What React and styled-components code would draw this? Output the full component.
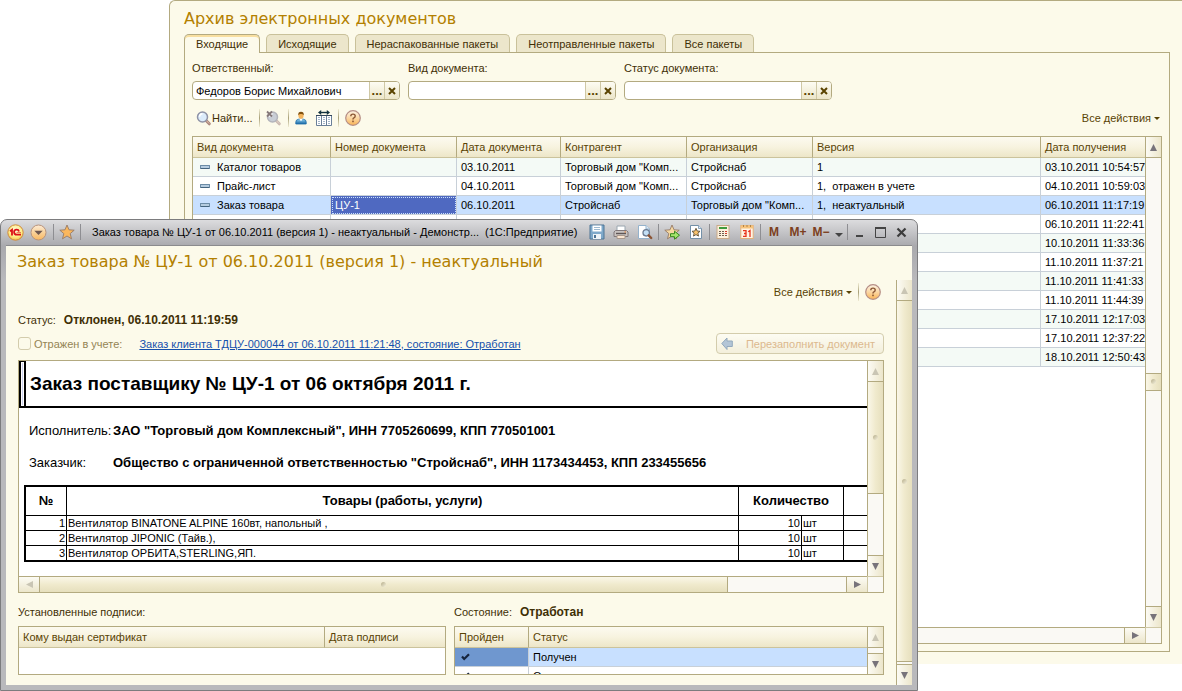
import styled, { createGlobalStyle, css } from "styled-components"


const line = "#b3aa80"
const paper = "#fcfaea"


const columns = ["Вид документа", "Номер документа", "Дата документа", "Контрагент", "Организация", "Версия", "Дата получения"]

const documents = [
  ["Каталог товаров", "", "03.10.2011", "Торговый дом \"Комп...", "Стройснаб", "1", "03.10.2011 10:54:57"],
  ["Прайс-лист", "", "04.10.2011", "Торговый дом \"Комп...", "Стройснаб", "1,  отражен в учете", "04.10.2011 10:59:03"],
  ["Заказ товара", "ЦУ-1", "06.10.2011", "Стройснаб", "Торговый дом \"Комп...", "1,  неактуальный", "06.10.2011 11:17:19"],
  ["", "", "", "", "", "", "06.10.2011 11:22:41"],
  ["", "", "", "", "", "", "10.10.2011 11:33:36"],
  ["", "", "", "", "", "", "11.10.2011 11:37:21"],
  ["", "", "", "", "", "", "11.10.2011 11:41:33"],
  ["", "", "", "", "", "", "11.10.2011 11:44:39"],
  ["", "", "", "", "", "", "17.10.2011 12:17:03"],
  ["", "", "", "", "", "", "17.10.2011 12:37:22"],
  ["", "", "", "", "", "", "18.10.2011 12:50:43"],
]

const goods = [
  "Вентилятор BINATONE ALPINE 160вт, напольный ,",
  "Вентилятор JIPONIC (Тайв.),",
  "Вентилятор ОРБИТА,STERLING,ЯП.",
]

const filters = [
  { id: "owner", label: "Ответственный:", value: "Федоров Борис Михайлович" },
  { id: "kind", label: "Вид документа:", value: "" },
  { id: "status", label: "Статус документа:", value: "" },
]


/* icons */

const FindIcon = ({ off }) => (
  <svg width="16" height="16" viewBox="0 0 16 16">
    <path d="M9.8 10.3 L13.3 13.8" stroke={off ? "#cbb9b0" : "#a9857c"} strokeWidth="3" strokeLinecap="round" />
    <path d="M10 10.3 L13 13.3" stroke={off ? "#e0d2c8" : "#e3c3ad"} strokeWidth="1" strokeLinecap="round" />
    <circle cx="6.5" cy="7" r="5" fill={off ? "#c9ced6" : "#dcecfb"} stroke={off ? "#b3b4bb" : "#8f93a6"} strokeWidth="1.5" />
    <path d="M3.5 6.8 a3.2 3.2 0 0 1 3-3" stroke="#fff" strokeWidth="1.5" fill="none" />
    {off && <path d="M1 1.5 L6 6.5 M6 1.5 L1 6.5" stroke="#86797a" strokeWidth="1.8" />}
  </svg>
)

const UserIcon = () => (
  <svg width="12" height="14" viewBox="0 0 12 14">
    <defs>
      <linearGradient id="coat" x1="0" y1="0" x2="0" y2="1">
        <stop offset="0" stopColor="#8fd0f0" />
        <stop offset="1" stopColor="#1766a4" />
      </linearGradient>
    </defs>
    <path d="M0.8 13 V11 Q0.8 8.6 3.6 8.2 H8.4 Q11.2 8.6 11.2 11 V13 Z" fill="url(#coat)" stroke="#1f6ea8" strokeWidth="0.8" />
    <path d="M4.3 8 L6 10.2 L7.7 8 Z" fill="#fff" />
    <ellipse cx="6" cy="4.6" rx="2.6" ry="3.2" fill="#f4b45c" />
    <path d="M3.2 4.2 Q3 0.8 6 0.8 Q9 0.8 8.8 4.2 Q7.6 2.8 6 2.9 Q4.4 2.8 3.2 4.2Z" fill="#80500f" />
  </svg>
)

const ColumnsIcon = () => (
  <svg width="16" height="16" viewBox="0 0 16 16">
    <path d="M0.5 5.5 H15.5 V15.5 H0.5 Z" fill="#fff" stroke="#6a7f98" />
    <path d="M5.5 5 V15 M10.5 5 V15" stroke="#6a7f98" />
    <path d="M0 5.5 H16" stroke="#33465c" />
    <path d="M2 7.5 H4 M2 9.5 H4 M2 11.5 H4 M2 13.5 H4 M7 7.5 H9 M7 9.5 H9 M7 11.5 H9 M7 13.5 H9 M12 7.5 H14 M12 9.5 H14 M12 11.5 H14 M12 13.5 H14" stroke="#a3b5c8" />
    <path d="M4 2.5 H12" stroke="#123240" strokeWidth="1.4" />
    <path d="M5.2 0 V5 L2 2.5 Z M10.8 0 V5 L14 2.5 Z" fill="#123240" />
  </svg>
)

const HelpIcon = () => (
  <svg width="16" height="16" viewBox="0 0 16 16">
    <defs>
      <linearGradient id="help" x1="0" y1="0" x2="0" y2="1">
        <stop offset="0" stopColor="#fdf3e4" />
        <stop offset="0.5" stopColor="#fbd7a4" />
        <stop offset="1" stopColor="#fab455" />
      </linearGradient>
    </defs>
    <circle cx="8" cy="8" r="7.3" fill="url(#help)" stroke="#b58e86" strokeWidth="1.2" />
    <path d="M5.8 6.2 Q5.8 4.1 8 4.1 Q10.2 4.1 10.2 6 Q10.2 7.2 8.9 7.9 Q8 8.3 8 9.4" stroke="#8a5634" strokeWidth="1.4" fill="none" />
    <rect x="7.2" y="10.6" width="1.6" height="1.6" fill="#8a5634" />
  </svg>
)

const LogoIcon = () => (
  <svg width="17" height="17" viewBox="0 0 17 17">
    <defs>
      <radialGradient id="logo" cx="0.5" cy="0.35" r="0.75">
        <stop offset="0" stopColor="#fffde0" />
        <stop offset="0.6" stopColor="#fdea80" />
        <stop offset="1" stopColor="#eda53a" />
      </radialGradient>
    </defs>
    <circle cx="8.5" cy="8.5" r="7.7" fill="url(#logo)" stroke="#d08a3c" />
    <path d="M3 7.2 L5 5.8 V11.4" stroke="#dc1018" strokeWidth="1.8" fill="none" />
    <path d="M12 7.4 A2.5 2.5 0 1 0 9.6 10.6 H14" stroke="#dc1018" strokeWidth="1.8" fill="none" />
    <path d="M9.6 8.6 H14" stroke="#dc1018" strokeWidth="0.6" fill="none" />
  </svg>
)

const MenuIcon = () => (
  <svg width="17" height="17" viewBox="0 0 17 17">
    <defs>
      <linearGradient id="menu" x1="0" y1="0" x2="0" y2="1">
        <stop offset="0" stopColor="#fdecd6" />
        <stop offset="0.45" stopColor="#f9d4a0" />
        <stop offset="1" stopColor="#f9b860" />
      </linearGradient>
    </defs>
    <circle cx="8.5" cy="8.5" r="7.5" fill="url(#menu)" stroke="#b8937c" />
    <path d="M4.3 6.8 H12.7 L8.5 11 Z" fill="#6f5850" />
  </svg>
)

const StarIcon = ({ go }) => (
  <svg width="16" height="16" viewBox="0 0 16 16">
    <path d="M8 1 L10 5.8 L15.2 6.2 L11.2 9.6 L12.5 14.8 L8 12 L3.5 14.8 L4.8 9.6 L0.8 6.2 L6 5.8 Z" fill={go ? "#f7d9a0" : "#fbb75c"} stroke="#967a66" strokeWidth="0.9" />
    {go && <path d="M6.5 9.7 H10.5 V7.2 L15.5 11.2 L10.5 15.2 V12.7 H6.5 Z" fill="#a4e66c" stroke="#37881c" />}
  </svg>
)

const SaveIcon = () => (
  <svg width="16" height="16" viewBox="0 0 16 16">
    <path d="M1 1 H15 V15 H1 Z" fill="#7fa9ca" stroke="#4e7495" />
    <rect x="3.5" y="1.5" width="9" height="6" fill="#fff" />
    <path d="M5 3.5 H11 M5 5.5 H11" stroke="#9db9d0" />
    <rect x="4" y="10" width="8" height="5" fill="#eef3f7" />
    <rect x="5" y="11" width="2" height="3" fill="#4e7495" />
  </svg>
)

const PrintIcon = () => (
  <svg width="16" height="16" viewBox="0 0 16 16">
    <path d="M4 2 H12 V7 H4 Z" fill="#fff" stroke="#9aa6b0" />
    <path d="M2.5 6.5 H13.5 L15 8 V12.5 H1 V8 Z" fill="#c9c3c0" stroke="#81787a" />
    <path d="M3 9.5 H13" stroke="#5f5656" strokeWidth="1.4" />
    <path d="M4 11.5 H12 V14.5 H4 Z" fill="#fae5d0" stroke="#a8988c" />
    <path d="M11.5 8 H13" stroke="#e07828" />
  </svg>
)

const PreviewIcon = () => (
  <svg width="16" height="16" viewBox="0 0 16 16">
    <path d="M1.5 1.5 H9 L12.5 5 V14.5 H1.5 Z" fill="#fff" stroke="#94b2cc" />
    <path d="M9 1.5 V5 H12.5" fill="#dcebf8" stroke="#94b2cc" />
    <circle cx="9.2" cy="8.8" r="3.2" fill="#c3e0f6" stroke="#6b7b92" strokeWidth="1.3" />
    <path d="M11.6 11.4 L14.2 14" stroke="#8c5434" strokeWidth="2.4" strokeLinecap="round" />
  </svg>
)

const FavoritesIcon = () => (
  <svg width="14" height="16" viewBox="0 0 14 16">
    <path d="M1.5 1.5 H9.5 L12.5 4.5 V14.5 H1.5 Z" fill="#fff" stroke="#7390a8" />
    <path d="M9.5 1.5 V4.5 H12.5" fill="#dcebf8" stroke="#7390a8" strokeWidth="0.8" />
    <path d="M7 4.3 L8.2 7 L11 7.3 L8.9 9.2 L9.5 12.1 L7 10.6 L4.5 12.1 L5.1 9.2 L3 7.3 L5.8 7 Z" fill="#f8c26c" stroke="#5e5038" strokeWidth="0.9" />
  </svg>
)

const CalcIcon = () => (
  <svg width="14" height="16" viewBox="0 0 14 16">
    <rect x="1" y="1.5" width="12" height="13" fill="#fdf0dc" stroke="#c9a987" />
    <rect x="3" y="3" width="8" height="2" fill="#3f9a3c" />
    <path d="M3 7.5 H5 M6 7.5 H8 M3 9.5 H5 M6 9.5 H8 M3 11.5 H5 M6 11.5 H8 M9 11.5 H11" stroke="#6f5e50" strokeWidth="1.2" />
    <path d="M9 7.5 H11 M9 9.5 H11" stroke="#d0392c" strokeWidth="1.2" />
  </svg>
)

const CalendarIcon = () => (
  <svg width="14" height="16" viewBox="0 0 14 16">
    <rect x="0.8" y="1.5" width="12.4" height="13" fill="#fff4e4" stroke="#dfb07c" />
    <rect x="0.8" y="1.5" width="12.4" height="3" fill="#f7c37c" />
    <path d="M3.5 1 V3 M7 1 V3 M10.5 1 V3" stroke="#b08448" />
    <path d="M3 6.7 H6 V12.3 H3 M4 9.5 H6 M8.2 7.8 L10 6.5 V13" stroke="#e8341c" strokeWidth="1.3" fill="none" />
  </svg>
)

const BackIcon = () => (
  <svg width="12" height="14" viewBox="0 0 12 14">
    <path d="M0.8 6.5 L6 1 V4 H11.3 V9.5 H6 V12.5 Z" fill="#b3c5d6" stroke="#93a9bd" />
  </svg>
)

const CheckIcon = () => (
  <svg width="9" height="8" viewBox="0 0 9 8">
    <path d="M1 3.5 L3.2 6 L8 1.2" stroke="#16243c" strokeWidth="2.2" fill="none" />
  </svg>
)

const arrows = {
  up: "M4 0 L8 8 H0 Z",
  down: "M0 0 H8 L4 8 Z",
  left: "M8 0 V8 L0 4 Z",
  right: "M0 0 L8 4 L0 8 Z",
}

const Arrow = ({ to, off }) => (
  <svg width="7" height="7" viewBox="0 0 8 8"><path d={arrows[to]} fill={off ? "#c9c5b4" : "#77737a"} /></svg>
)


const ScrollBar = ({ across, before = 0, thumb = 0, after = 0, startOff, endOff }) => (

  <Scroll $across={across}>

    <ScrollButton type="button" $across={across} aria-label={across ? "Влево" : "Вверх"}>
      <Arrow to={across ? "left" : "up"} off={startOff} />
    </ScrollButton>

    <Track $across={across}>
      {before > 0 && <Gap $grow={before} />}
      {thumb > 0 && <Thumb $across={across} $grow={thumb} $atStart={!before}><i /></Thumb>}
      {after > 0 && <Gap $grow={after} />}
    </Track>

    <ScrollButton type="button" $across={across} $end aria-label={across ? "Вправо" : "Вниз"}>
      <Arrow to={across ? "right" : "down"} off={endOff} />
    </ScrollButton>

  </Scroll>

)


const Archive = () => (

  <ArchivePanel>

    <PageTitle as="h1">Архив электронных документов</PageTitle>

    <Tabs>
      {["Входящие", "Исходящие", "Нераспакованные пакеты", "Неотправленные пакеты", "Все пакеты"].map((tab, i) => (
        <Tab key={tab} type="button" $active={i === 0}>{tab}</Tab>
      ))}
    </Tabs>

    <TabBody>

      <Filters>
        {filters.map(({ id, label, value }) => (
          <div key={id}>
            <label htmlFor={id}>{label}</label>
            <Field>
              <input id={id} type="text" defaultValue={value} />
              <FieldButton type="button" aria-label="Выбрать">...</FieldButton>
              <FieldButton type="button" aria-label="Очистить">
                <svg width="8" height="8" viewBox="0 0 8 8"><path d="M1 1 L7 7 M7 1 L1 7" stroke="#5a4300" strokeWidth="2" /></svg>
              </FieldButton>
            </Field>
          </div>
        ))}
      </Filters>

      <Toolbar>
        <ToolButton type="button"><FindIcon />Найти...</ToolButton>
        <Divider />
        <ToolButton type="button" aria-label="Отменить поиск"><FindIcon off /></ToolButton>
        <Divider />
        <ToolButton type="button" aria-label="Ответственный"><UserIcon /></ToolButton>
        <ToolButton type="button" aria-label="Настройка"><ColumnsIcon /></ToolButton>
        <Divider />
        <ToolButton type="button" aria-label="Справка"><HelpIcon /></ToolButton>
        <Actions type="button">Все действия<i /></Actions>
      </Toolbar>

      <GridBox>
        <GridView>
          <Grid>
            <colgroup>
              <col width="138" /><col width="126" /><col width="104" /><col width="126" /><col width="126" /><col /><col width="104" />
            </colgroup>
            <thead>
              <tr>{columns.map(name => <th key={name}>{name}</th>)}</tr>
            </thead>
            <tbody>
              {documents.map((row, i) => (
                <Row key={row[6]} $odd={i % 2 === 0} $selected={i === 2}>
                  {row.map((cell, j) => (
                    <Cell key={j} $current={i === 2 && j === 1}>{j === 0 && <Dash />}{cell}</Cell>
                  ))}
                </Row>
              ))}
            </tbody>
          </Grid>
        </GridView>
        <ScrollBar before={216} thumb={16} after={216} />
        <ScrollBar across thumb={60} after={40} />
        <Corner />
      </GridBox>

    </TabBody>

  </ArchivePanel>

)


const TitleBar = () => (

  <Caption>

    <CaptionButton type="button" $w={18} aria-label="1С"><LogoIcon /></CaptionButton>
    <CaptionButton type="button" $w={28} aria-label="Меню"><MenuIcon /></CaptionButton>
    <CaptionLine />
    <CaptionButton type="button" aria-label="Избранное"><StarIcon /></CaptionButton>
    <CaptionLine />

    <CaptionText>
      <span>Заказ товара № ЦУ-1 от 06.10.2011 (версия 1) - неактуальный - Демонстр...</span>
      <span>(1С:Предприятие)</span>
    </CaptionText>

    <CaptionButton type="button" aria-label="Сохранить"><SaveIcon /></CaptionButton>
    <CaptionButton type="button" aria-label="Печать"><PrintIcon /></CaptionButton>
    <CaptionButton type="button" aria-label="Просмотр"><PreviewIcon /></CaptionButton>
    <CaptionLine />
    <CaptionButton type="button" aria-label="Добавить в избранное"><StarIcon go /></CaptionButton>
    <CaptionButton type="button" aria-label="Список избранного"><FavoritesIcon /></CaptionButton>
    <CaptionLine />
    <CaptionButton type="button" aria-label="Калькулятор"><CalcIcon /></CaptionButton>
    <CaptionButton type="button" aria-label="Календарь"><CalendarIcon /></CaptionButton>
    <CaptionLine />
    <CaptionButton type="button">M</CaptionButton>
    <CaptionButton type="button">M+</CaptionButton>
    <CaptionButton type="button" $w={22}>M−</CaptionButton>
    <CaptionButton type="button" $w={14} aria-label="Еще">
      <svg width="8" height="12" viewBox="0 0 8 12"><path d="M0 7 H8 L4 11 Z" fill="#444" /></svg>
    </CaptionButton>
    <CaptionLine />
    <CaptionButton type="button" $w={21} aria-label="Свернуть">
      <svg width="11" height="11" viewBox="0 0 11 11"><path d="M2 9 H9" stroke="#444" strokeWidth="2" /></svg>
    </CaptionButton>
    <CaptionButton type="button" $w={21} aria-label="Развернуть">
      <svg width="11" height="11" viewBox="0 0 11 11"><path d="M0.5 1 V10.5 H10.5 V1" stroke="#444" fill="none" /><path d="M0 1 H11" stroke="#444" strokeWidth="2" /></svg>
    </CaptionButton>
    <CaptionButton type="button" $w={21} aria-label="Закрыть">
      <svg width="11" height="11" viewBox="0 0 11 11"><path d="M1.5 1.5 L9.5 9.5 M9.5 1.5 L1.5 9.5" stroke="#3c3c3c" strokeWidth="2.2" /></svg>
    </CaptionButton>

  </Caption>

)


const OrderSheet = () => (

  <Sheet>

    <SheetView>

      <SheetHead>
        <Marker />
        <h3>Заказ поставщику № ЦУ-1 от 06 октября 2011 г.</h3>
      </SheetHead>

      <Party><span>Исполнитель:</span><b>ЗАО "Торговый дом Комплексный", ИНН 7705260699, КПП 770501001</b></Party>
      <Party><span>Заказчик:</span><b>Общество с ограниченной ответственностью "Стройснаб", ИНН 1173434453, КПП 233455656</b></Party>

      <Goods>
        <colgroup>
          <col width="41" /><col /><col width="63" /><col width="42" /><col width="23" />
        </colgroup>
        <thead>
          <tr>
            <th>№</th>
            <th>Товары (работы, услуги)</th>
            <th colSpan="2">Количество</th>
            <th></th>
          </tr>
        </thead>
        <tbody>
          {goods.map((name, i) => (
            <tr key={name}>
              <Num>{i + 1}</Num>
              <td>{name}</td>
              <Num>10</Num>
              <td>шт</td>
              <td></td>
            </tr>
          ))}
        </tbody>
      </Goods>

    </SheetView>

    <ScrollBar thumb={112} after={61} startOff />
    <ScrollBar across thumb={688} after={118} startOff />
    <Corner />

  </Sheet>

)


const Order = () => (

  <OrderWindow>

    <TitleBar />

    <Client>

      <PageTitle>Заказ товара № ЦУ-1 от 06.10.2011 (версия 1) - неактуальный</PageTitle>

      <Body>

        <Form>

          <FormTools>
            <Actions type="button">Все действия<i /></Actions>
            <Divider />
            <ToolButton type="button" aria-label="Справка"><HelpIcon /></ToolButton>
          </FormTools>

          <Status>Статус:<b>Отклонен, 06.10.2011 11:19:59</b></Status>

          <Accounting>
            <input id="accounted" type="checkbox" disabled />
            <label htmlFor="accounted">Отражен в учете:</label>
            <a href="#order">Заказ клиента ТДЦУ-000044 от 06.10.2011 11:21:48, состояние: Отработан</a>
            <Refill type="button" disabled><BackIcon />Перезаполнить документ</Refill>
          </Accounting>

          <OrderSheet />

          <Lower>

            <section>
              <Status>Установленные подписи:</Status>
              <ListBox>
                <GridView>
                  <Grid>
                    <colgroup><col width="306" /><col /></colgroup>
                    <thead><tr><th>Кому выдан сертификат</th><th>Дата подписи</th></tr></thead>
                  </Grid>
                </GridView>
              </ListBox>
            </section>

            <section>
              <Status>Состояние:<b>Отработан</b></Status>
              <ListBox>
                <GridView>
                  <Grid>
                    <colgroup><col width="74" /><col /></colgroup>
                    <thead><tr><th>Пройден</th><th>Статус</th></tr></thead>
                    <tbody>
                      <Row $selected><Cell $passed><CheckIcon /></Cell><Cell>Получен</Cell></Row>
                      <Row><Cell><CheckIcon /></Cell><Cell>О</Cell></Row>
                    </tbody>
                  </Grid>
                </GridView>
                <ScrollBar after={1} startOff />
              </ListBox>
            </section>

          </Lower>

        </Form>

        <ScrollBar thumb={360} after={2} startOff />

      </Body>

    </Client>

  </OrderWindow>

)


const App = () => (
  <Desktop>
    <Global />
    <Archive />
    <Order />
  </Desktop>
)


const Global = createGlobalStyle`

  *{
    box-sizing: border-box;
  }

  body{
    margin: 0;
    background: white;
    color: #3f2f05;
    font: 11px/14px "Liberation Sans", Arial, sans-serif;
  }

  button, input{
    font: inherit;
    color: inherit;
    margin: 0;
    padding: 0;
    border: 0 none;
    background: none;
  }

  h1, h2, h3{
    margin: 0;
    font-weight: normal;
  }

  svg{
    display: block;
    flex: none;
  }

`

const Desktop = styled.div`

  position: relative;
  display: flex;
  min-height: 100vh;
  padding: 0 0 27px 169px;
  overflow: hidden;

`

const ArchivePanel = styled.main`

  flex: 1;
  min-width: 0;
  display: flex;
  flex-direction: column;
  padding: 6px 12px 12px 14px;
  background: ${paper};
  border-top: 1px solid ${line};
  border-left: 1px solid ${line};
  border-top-left-radius: 6px;

`

const PageTitle = styled.h2`

  font: 16px/24px "DejaVu Sans", Verdana, sans-serif;
  color: #b38000;
  white-space: nowrap;

`

const Tabs = styled.nav`

  display: flex;
  gap: 6px;
  height: 18px;
  margin-top: 3px;

`

const Tab = styled.button`

  height: 18px;
  padding: 0 11px;
  border: 1px solid #c9c19a;
  border-bottom: 0 none;
  border-radius: 5px 5px 0 0;
  background: #ece6cb;
  color: #3f2f05;
  white-space: nowrap;

  ${({ $active }) => $active && css`
    position: relative;
    height: 19px;
    border-color: ${line};
    background: ${paper};
    box-shadow: inset 0 2px 0 #f8dfa0;
  `}

`

const TabBody = styled.div`

  flex: 1;
  display: flex;
  flex-direction: column;
  padding: 8px 7px 7px;
  border: 1px solid ${line};

`

const Filters = styled.div`

  display: flex;
  gap: 8px;

  > div{
    width: 208px;
  }

  label{
    display: block;
  }

`

const Field = styled.div`

  display: flex;
  height: 19px;
  margin-top: 6px;
  border: 1px solid ${line};
  border-radius: 4px;
  background: white;
  overflow: hidden;

  input{
    flex: 1;
    min-width: 0;
    padding: 0 3px;
    color: black;
    outline: none;
  }

`

const FieldButton = styled.button`

  width: 15px;
  display: flex;
  align-items: center;
  justify-content: center;
  border-left: 1px solid #cfc8a5;
  background: linear-gradient(#fdfcf3, #ece6c9);
  color: #5a4300;
  font-size: 13px;
  font-weight: bold;

`

const Toolbar = styled.div`

  display: flex;
  align-items: center;
  height: 20px;
  margin: 8px 0;
  padding: 0 2px 0 4px;

`

const ToolButton = styled.button`

  display: flex;
  align-items: center;

  & + &{
    margin-left: 9px;
  }

`

const Divider = styled.span`

  width: 1px;
  height: 18px;
  margin: 0 6px;
  background: linear-gradient(#f0ecd4, #a8a078, #f0ecd4);

`

const Actions = styled.button`

  display: flex;
  align-items: center;
  gap: 3px;
  margin-left: auto;
  color: #594304;

  i{
    border: 3px solid transparent;
    border-top-color: #594304;
    border-bottom: 0 none;
  }

`

const GridBox = styled.div`

  flex: 1;
  display: grid;
  grid-template: minmax(0, 1fr) 16px / minmax(0, 1fr) 16px;
  border: 1px solid ${line};
  background: white;

`

const GridView = styled.div`

  flex: 1;
  min-width: 0;
  overflow: hidden;

`

const Grid = styled.table`

  width: 100%;
  table-layout: fixed;
  border-collapse: separate;
  border-spacing: 0;

  th{
    height: 21px;
    padding: 0 4px;
    border-right: 1px solid ${line};
    border-bottom: 1px solid #cbc39c;
    background: linear-gradient(#fcfaf0, #f7f3df 50%, #ede6c8);
    color: #594304;
    font-weight: normal;
    text-align: left;
    white-space: nowrap;
  }

  th:last-child{
    border-right: 0 none;
  }

`

const Row = styled.tr`

  background: ${({ $odd, $selected }) => $selected ? "#c8e0ff" : $odd ? "#f4faf6" : "white"};

`

const Cell = styled.td`

  height: 19px;
  padding: 0 0 0 4px;
  border-right: 1px solid #c8d0d8;
  border-bottom: 1px solid #c8d0d8;
  color: black;
  white-space: pre;
  overflow: hidden;

  &:last-child{
    border-right: 0 none;
  }

  ${({ $current }) => $current && css`
    background: #4f69c1;
    color: white;
    outline: 1px dotted #c8e0ff;
    outline-offset: -2px;
  `}

  ${({ $passed }) => $passed && css`
    background: #6f97cf;
  `}

  > svg{
    margin-left: 2px;
  }

`

const Dash = styled.i`

  display: inline-block;
  width: 10px;
  height: 4px;
  margin: 0 7px 2px 3px;
  border: 1px solid #6b8ba6;
  border-bottom-color: #44647f;
  border-radius: 1px;
  background: #b5cce0;

`

const Scroll = styled.div`

  display: flex;
  flex: none;
  flex-direction: ${({ $across }) => $across ? "row" : "column"};
  ${({ $across }) => $across ? "height" : "width"}: 16px;
  min-width: 0;
  min-height: 0;
  border-${({ $across }) => $across ? "top" : "left"}: 1px solid ${line};
  background: #faf9f4;

`

const ScrollButton = styled.button`

  flex: none;
  display: flex;
  align-items: center;
  justify-content: center;
  ${({ $across }) => $across ? "width" : "height"}: 21px;
  border: 0 solid ${line};
  border-${({ $across, $end }) => $across ? ($end ? "left" : "right") : ($end ? "top" : "bottom")}-width: 1px;
  background: linear-gradient(${({ $across }) => $across ? "180deg" : "90deg"}, #fcfbf4, #ece6cb);

`

const Track = styled.div`

  flex: 1;
  min-width: 0;
  min-height: 0;
  display: flex;
  flex-direction: ${({ $across }) => $across ? "row" : "column"};

`

const Gap = styled.div`

  flex: ${({ $grow }) => $grow} 1 0;

`

const Thumb = styled.div`

  flex: ${({ $grow }) => $grow} 1 0;
  display: flex;
  align-items: center;
  justify-content: center;
  border: 0 solid ${line};
  border-${({ $across }) => $across ? "right" : "bottom"}-width: 1px;
  border-${({ $across }) => $across ? "left" : "top"}-width: ${({ $atStart }) => $atStart ? 0 : "1px"};
  background: linear-gradient(${({ $across }) => $across ? "180deg" : "90deg"}, #faf7e8, #f0eacd 50%, #e6dfbd);

  i{
    width: 5px;
    height: 5px;
    border-radius: 3px;
    background: linear-gradient(135deg, #b5ad8a, #f6f2de);
  }

`

const Corner = styled.div`

  border-top: 1px solid #cfc8a5;
  border-left: 1px solid #cfc8a5;
  background: #faf9f4;

`

const OrderWindow = styled.section`

  position: absolute;
  top: 219px;
  bottom: 0;
  left: 0;
  right: 264px;
  display: flex;
  flex-direction: column;
  padding: 0 5px 5px;
  border: 1px solid #7c7c7e;
  border-radius: 7px 7px 0 0;
  background: linear-gradient(#dcdcde, #a9a9ad 26px, #b9b9bc 60px, #b9b9bc);

`

const Caption = styled.header`

  display: flex;
  align-items: center;
  height: 26px;
  padding-bottom: 1px;
  border-bottom: 1px solid #8b8b8d;

`

const CaptionButton = styled.button`

  width: ${({ $w = 24 }) => $w}px;
  display: flex;
  align-items: center;
  justify-content: center;
  color: #7c3f20;
  font-size: 12px;
  font-weight: bold;

`

const CaptionLine = styled.span`

  width: 1px;
  height: 16px;
  margin: 0 1px;
  background: #8e8e92;

`

const CaptionText = styled.div`

  flex: 1;
  min-width: 0;
  display: flex;
  gap: 6px;
  padding-left: 10px;
  color: black;
  white-space: nowrap;
  overflow: hidden;

`

const Client = styled.div`

  flex: 1;
  min-height: 0;
  display: flex;
  flex-direction: column;
  padding-top: 4px;
  background: ${paper};

  > h2{
    height: 30px;
    padding-left: 11px;
  }

`

const Body = styled.div`

  flex: 1;
  min-height: 0;
  display: flex;

`

const Form = styled.div`

  flex: 1;
  min-width: 0;
  display: flex;
  flex-direction: column;
  padding: 0 12px 10px;

`

const FormTools = styled.div`

  display: flex;
  align-items: center;
  height: 24px;
  margin-bottom: 9px;
  padding-right: 3px;

`

const Status = styled.div`

  display: flex;
  align-items: center;
  gap: 8px;
  height: 14px;
  color: #3f2f05;

  b{
    font-size: 12px;
  }

`

const Accounting = styled.div`

  display: flex;
  align-items: center;
  height: 21px;
  margin: 6px 0;
  color: #948454;
  white-space: nowrap;

  input{
    appearance: none;
    width: 13px;
    height: 13px;
    margin-right: 3px;
    border: 1px solid #d3ccac;
    border-radius: 3px;
  }

  a{
    margin: 0 auto 0 17px;
    color: #1550ac;
  }

`

const Refill = styled.button`

  display: flex;
  align-items: center;
  gap: 13px;
  height: 21px;
  padding: 0 8px 0 4px;
  border: 1px solid #d3ccac;
  border-radius: 4px;
  background: linear-gradient(#fdfcf3, #f3efdb);
  color: #dcb98e;

`

const Sheet = styled(GridBox)`

  min-height: 0;

`

const SheetView = styled.div`

  overflow: hidden;
  color: black;

`

const SheetHead = styled.div`

  display: flex;
  align-items: center;
  height: 47px;
  border-bottom: 2px solid black;

  h3{
    padding-left: 4px;
    font-size: 19px;
    line-height: 24px;
    font-weight: bold;
    white-space: nowrap;
  }

`

const Marker = styled.span`

  align-self: stretch;
  width: 7px;
  border: 2px solid black;
  border-top-width: 1px;
  border-bottom: 0 none;
  background: #cfd2f2;
  box-shadow: inset 0 0 0 1px white;

`

const Party = styled.div`

  display: flex;
  align-items: center;
  height: 16px;
  margin: 15px 0 16px 10px;
  font-size: 13px;
  line-height: 16px;
  white-space: nowrap;

  span{
    width: 84px;
    flex: none;
  }

  & + &{
    margin-bottom: 14px;
  }

`

const Goods = styled.table`

  width: calc(100% - 5px);
  margin-left: 5px;
  table-layout: fixed;
  border-collapse: separate;
  border-spacing: 0;
  border: 2px solid black;
  border-right: 0 none;

  th, td{
    height: 15px;
    padding: 0 1px;
    border-right: 1px solid black;
    line-height: 14px;
    white-space: nowrap;
  }

  td{
    border-top: 1px solid black;
  }

  th{
    height: 28px;
    font-size: 13px;
  }

  th:last-child, td:last-child{
    border-right: 0 none;
  }

`

const Num = styled.td`

  text-align: right;

`

const Lower = styled.div`

  display: grid;
  grid-template-columns: minmax(0, 428fr) minmax(0, 430fr);
  gap: 8px;
  margin-top: 12px;

`

const ListBox = styled.div`

  display: flex;
  height: 49px;
  margin-top: 7px;
  border: 1px solid ${line};
  background: white;

`


export default App
